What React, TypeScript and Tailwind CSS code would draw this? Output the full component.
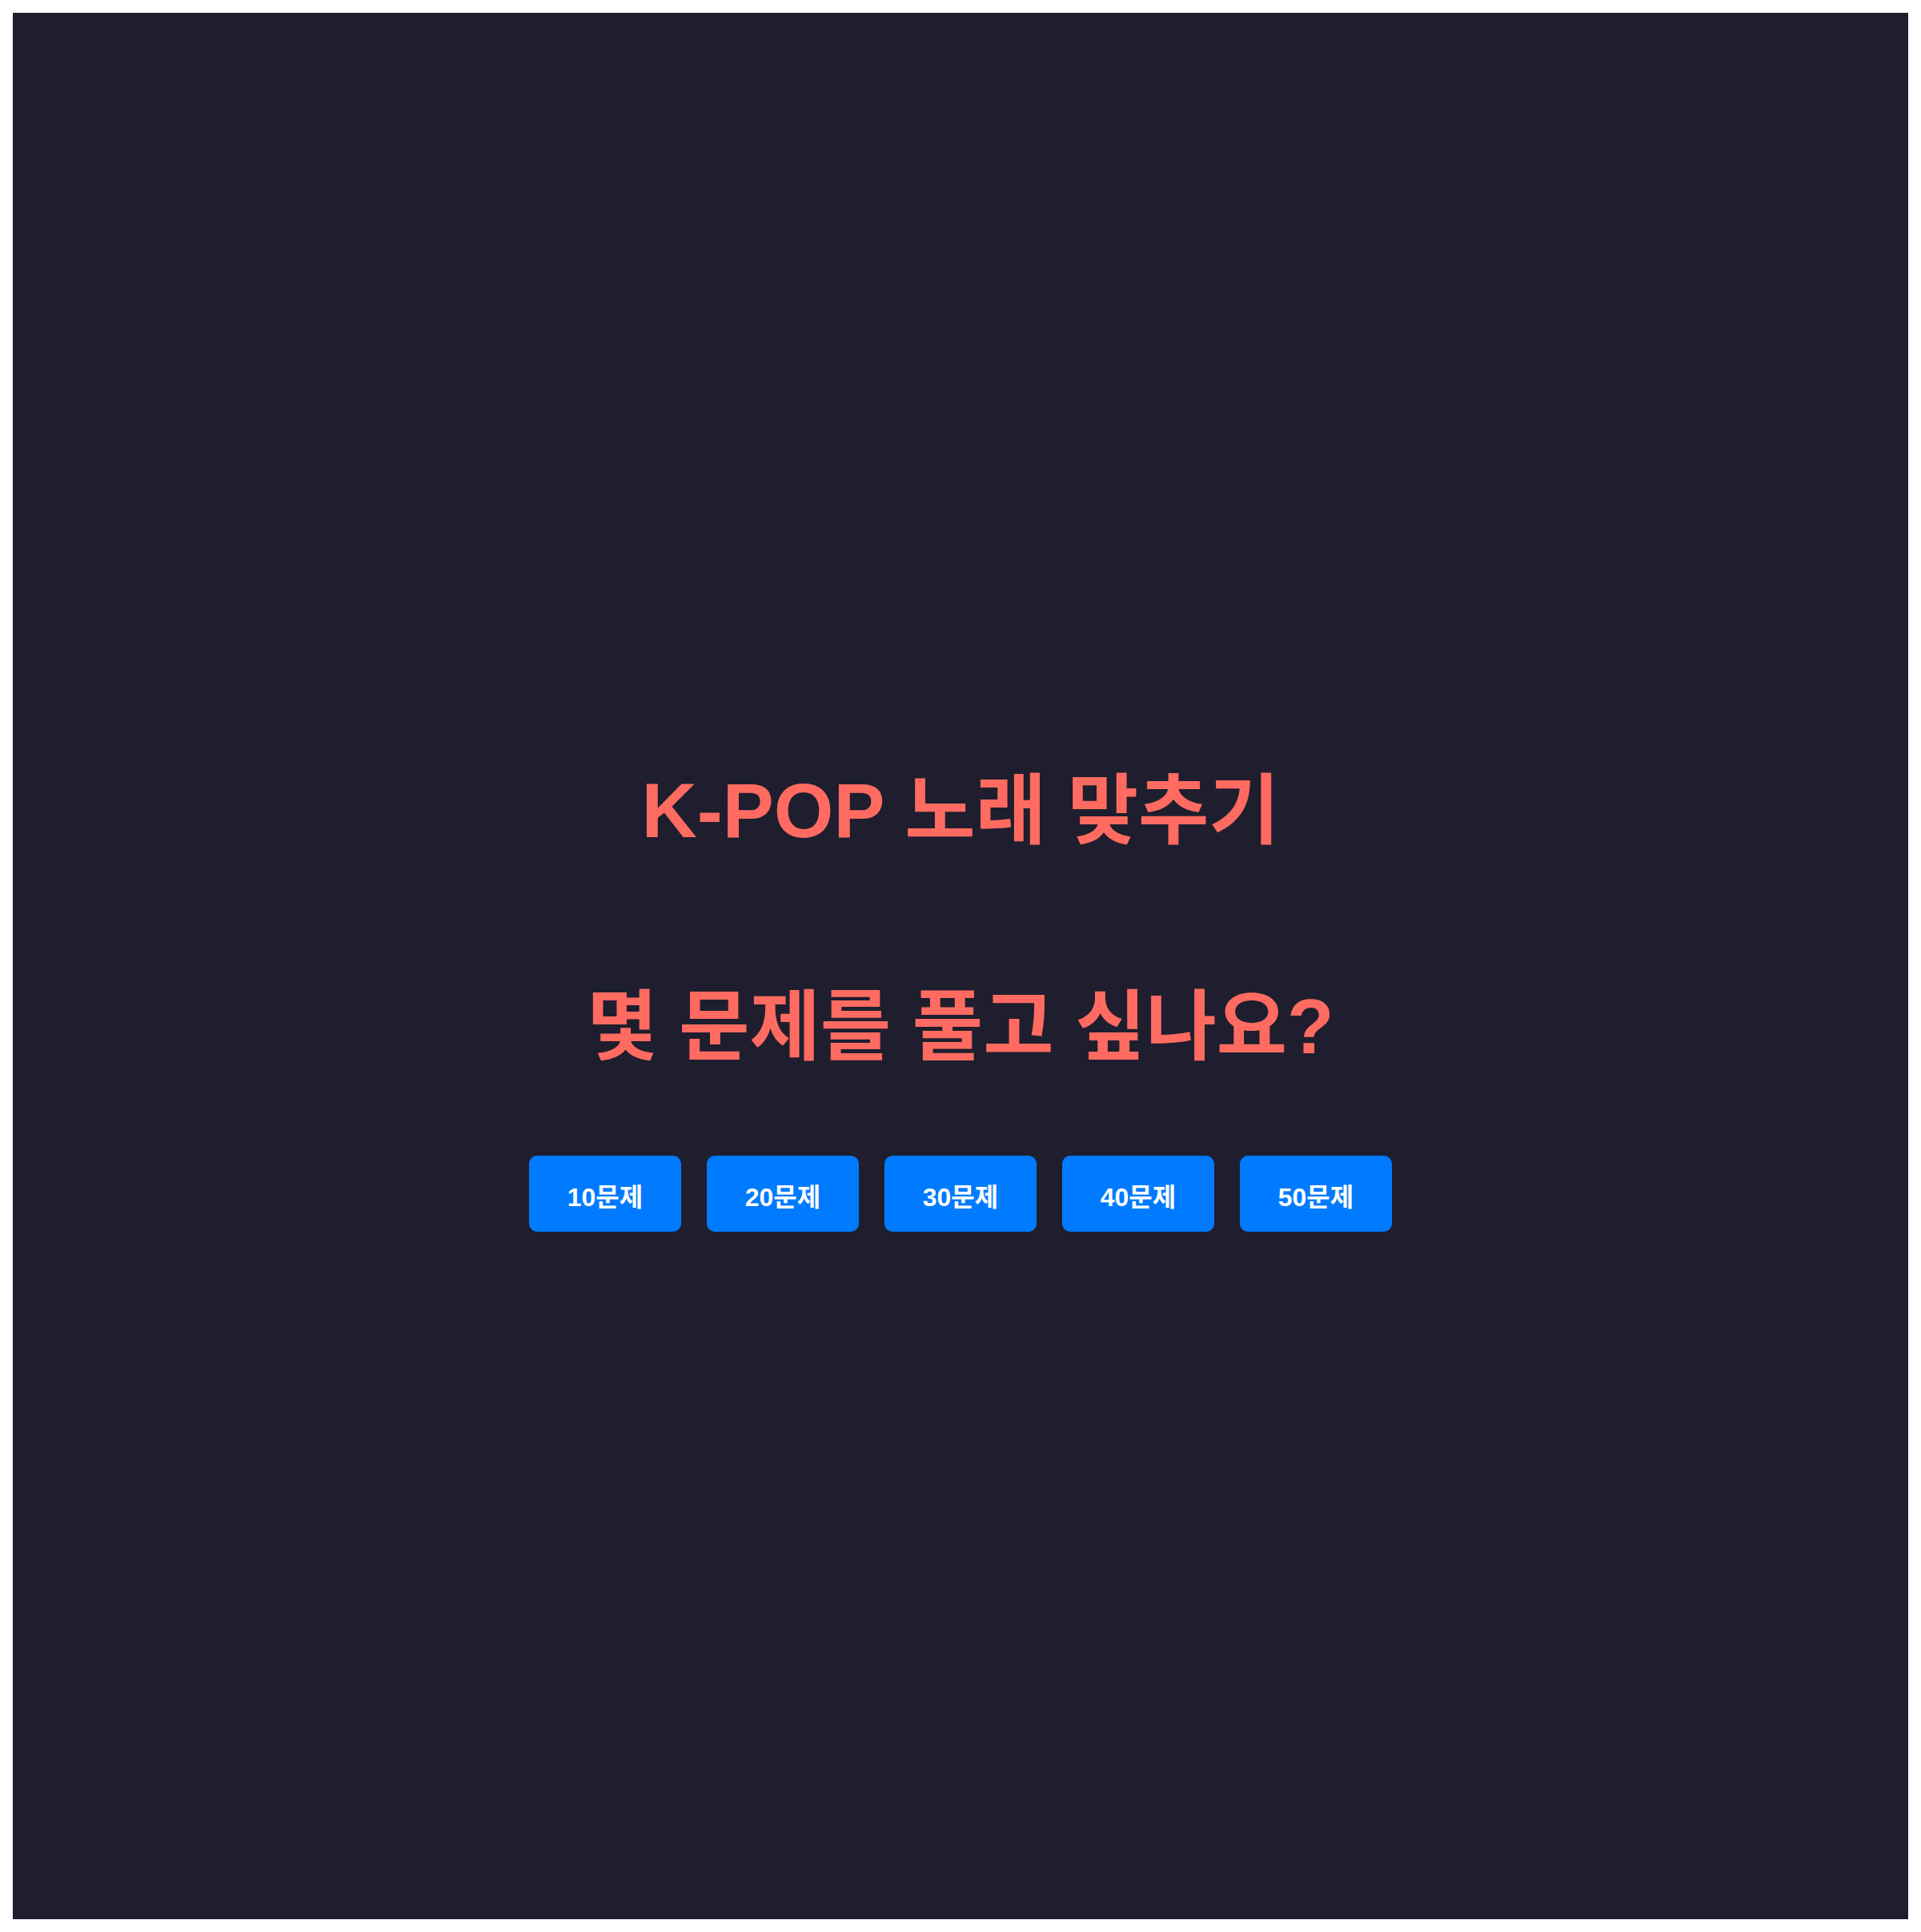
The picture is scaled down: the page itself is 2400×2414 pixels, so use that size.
const COUNTS = [10, 20, 30, 40, 50];

export default function App() {
  return (
    <div className="min-h-screen bg-white p-4">
      <div className="flex h-[2382px] flex-col items-center justify-center bg-[#1f1e2e] pt-[83px] font-['Liberation_Sans','Noto_Sans_CJK_KR',sans-serif]">
        <h1 className="text-[96px] font-bold leading-[110px] whitespace-nowrap text-[#ff6b61]">K-POP 노래 맞추기</h1>
        <h2 className="mt-[160px] text-[96px] font-bold leading-[110px] whitespace-nowrap text-[#ff6b61]">
          몇 문제를 풀고 싶나요?
        </h2>
        <div className="mt-[106px] flex gap-8">
          {COUNTS.map((n) => (
            <button
              key={n}
              className="flex h-[95px] w-[190px] items-center justify-center rounded-[10px] bg-[#007bff] pt-2 text-[32px] font-bold text-white"
            >
              {n}문제
            </button>
          ))}
        </div>
      </div>
    </div>
  );
}
